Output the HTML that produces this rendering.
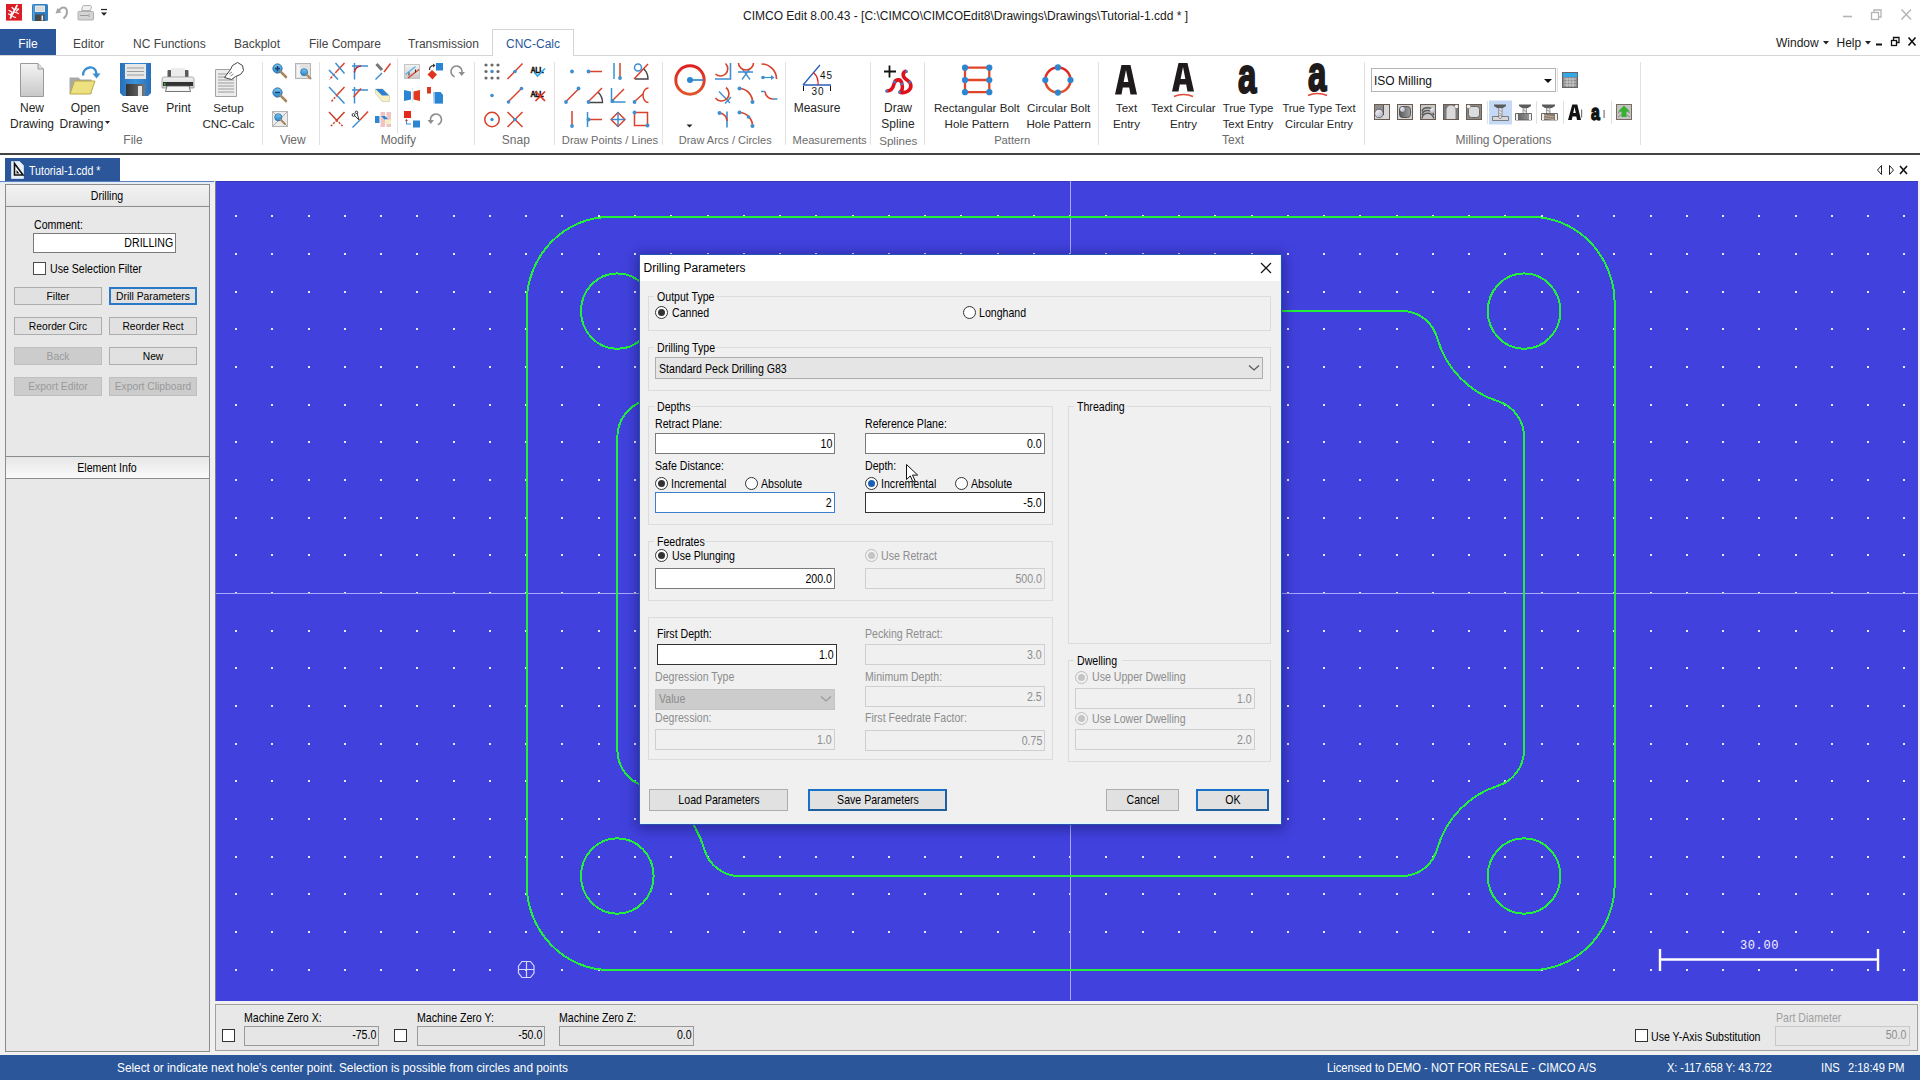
<!DOCTYPE html>
<html><head><meta charset="utf-8">
<style>
*{box-sizing:border-box}
html,body{margin:0;padding:0}
body{width:1920px;height:1080px;overflow:hidden;position:relative;background:#fff;font-family:"Liberation Sans",sans-serif;font-size:12px;color:#222}
.a{position:absolute}
.t{position:absolute;white-space:nowrap;line-height:1}
</style></head><body>
<div class="t" style="font-size:12px;color:#1a1a1a;top:9.84px;left:743px;">CIMCO Edit 8.00.43 - [C:\CIMCO\CIMCOEdit8\Drawings\Drawings\Tutorial-1.cdd * ]</div>
<svg class="a" style="left:1836px;top:4px" width="84" height="50">
<path d="M7 12.5h9" stroke="#b4b4b4" stroke-width="1.6"/>
<g fill="none" stroke="#b4b4b4" stroke-width="1.3"><rect x="35.5" y="8.5" width="7" height="7"/><path d="M38 8.5V6h7v7h-2.5"/></g>
<path d="M65.5 5.5l9.5 10M75 5.5l-9.5 10" stroke="#b4b4b4" stroke-width="1.4"/>
<path d="M40 40.5h6" stroke="#111" stroke-width="2"/>
<g fill="none" stroke="#111" stroke-width="1.3"><rect x="55.5" y="36.5" width="5" height="5"/><path d="M57.5 36.5V33.5h5.5v5h-2"/></g>
<path d="M72.5 33.5l7 8M79.5 33.5l-7 8" stroke="#111" stroke-width="1.6"/>
</svg>
<div class="a" style="left:0px;top:55px;width:1920px;height:1px;background:#d5d5d5"></div>
<div class="a" style="left:0px;top:29px;width:56px;height:26px;background:#2b579a"></div>
<div class="t" style="font-size:12px;color:#fff;top:37.74px;left:-172px;width:400px;text-align:center;">File</div>
<div class="a" style="left:492px;top:29px;width:82px;height:27px;border:1px solid #d5d5d5;border-bottom:none;background:#fff"></div>
<div class="t" style="font-size:12px;color:#444;top:37.74px;left:73px;">Editor</div>
<div class="t" style="font-size:12px;color:#444;top:37.74px;left:133px;">NC Functions</div>
<div class="t" style="font-size:12px;color:#444;top:37.74px;left:234px;">Backplot</div>
<div class="t" style="font-size:12px;color:#444;top:37.74px;left:309px;">File Compare</div>
<div class="t" style="font-size:12px;color:#444;top:37.74px;left:408px;">Transmission</div>
<div class="t" style="font-size:12px;color:#2b579a;top:37.74px;left:506px;">CNC-Calc</div>
<div class="t" style="font-size:12px;color:#1a1a1a;top:36.54px;left:1776px;">Window</div>
<div class="t" style="font-size:12px;color:#1a1a1a;top:36.54px;left:1836.5px;">Help</div>
<svg class="a" style="left:1820px;top:38px" width="60" height="10"><path d="M3 3h6l-3 3.5z" fill="#222"/><path d="M45 3h6l-3 3.5z" fill="#222"/></svg>
<svg class="a" style="left:0;top:0" width="1920" height="156">
<defs>
<linearGradient id="gRed" x1="0" y1="0" x2="0" y2="1"><stop offset="0" stop-color="#e02020"/><stop offset="1" stop-color="#e0552a"/></linearGradient>
<linearGradient id="gLens" x1="0" y1="0" x2="0" y2="1"><stop offset="0" stop-color="#7cc6f0"/><stop offset="1" stop-color="#2187d0"/></linearGradient>
<linearGradient id="gGray" x1="0" y1="0" x2="0" y2="1"><stop offset="0" stop-color="#f4f4f4"/><stop offset="1" stop-color="#c8c8c8"/></linearGradient>
<linearGradient id="gShut" x1="0" y1="0" x2="1" y2="0"><stop offset="0" stop-color="#333"/><stop offset="1" stop-color="#777"/></linearGradient><linearGradient id="gSave" x1="0" y1="0" x2="1" y2="0"><stop offset="0" stop-color="#2a6fb8"/><stop offset="0.5" stop-color="#3b95dc"/><stop offset="1" stop-color="#2a6fb8"/></linearGradient>
<g id="lensP"><circle cx="5.5" cy="5.5" r="4.6" fill="url(#gLens)" stroke="#2a6aa0" stroke-width="1"/><path d="M8.6 8.6L14 14" stroke="#a8865e" stroke-width="2.6" stroke-linecap="round"/></g>
</defs>
<!-- quick access toolbar -->
<rect x="6" y="4" width="16" height="16.6" fill="#dc1c24"/>
<g stroke="#fff" stroke-linecap="round"><path d="M10.5 18l6.5-12.5" stroke-width="1.7"/><path d="M9 10.5l3 1.5M8.5 14l3 1M15.5 8.5l3 1M14.5 12l4 1.5M12 7.5l2 2M10.5 15.5l1-2.5M16.5 11l2-2M13 16.5l2.5 1" stroke-width="1.3"/></g>
<rect x="32" y="4" width="16" height="17" rx="1.5" fill="#2f7fc4"/><rect x="33" y="5" width="1.5" height="15" fill="#5a9fd8"/>
<rect x="35" y="5.5" width="10" height="6.5" fill="#e6e6e6"/><path d="M36 8h8M36 10h8" stroke="#c4c4c4" stroke-width=".7"/><rect x="35" y="14.5" width="9.5" height="6.5" fill="#4a4a4a"/><rect x="41.5" y="15.5" width="1.6" height="5" fill="#eee"/>
<path d="M58.5 11.5C61 6 67 6 67 12C67 15 65.5 17 63.5 18.5" fill="none" stroke="#a6a6a6" stroke-width="2"/><path d="M55.5 13.5L57.5 8L61.5 12.5z" fill="#a6a6a6"/>
<path d="M82.5 6.5l1-1h7l1 1-1 4h-9z" fill="#f0f0f0" stroke="#a8a8a8" stroke-width=".9"/><path d="M79 11.5h13.5a1 1 0 0 1 1 1v6.5a1 1 0 0 1-1 1h-13.5a1 1 0 0 1-1-1v-6.5a1 1 0 0 1 1-1z" fill="#d4d4d4" stroke="#a8a8a8" stroke-width=".9"/><path d="M80 15.5h8M89 14v3" stroke="#9a9a9a" stroke-width="1"/>
<path d="M101 9.5h6" stroke="#222" stroke-width="1.2"/><path d="M101 12.5h6l-3 3.3z" fill="#222"/>
<!-- separators -->
<g fill="#e1e1e1"><rect x="262" y="62" width="1" height="83"/><rect x="319" y="62" width="1" height="83"/><rect x="474" y="62" width="1" height="83"/><rect x="554" y="62" width="1" height="83"/><rect x="662" y="62" width="1" height="83"/><rect x="785" y="62" width="1" height="83"/><rect x="870" y="62" width="1" height="83"/><rect x="924" y="62" width="1" height="83"/><rect x="1098" y="62" width="1" height="83"/><rect x="1364" y="62" width="1" height="83"/><rect x="1640" y="62" width="1" height="83"/><rect x="397" y="58" width="1" height="75"/>
<rect x="1487" y="101" width="1" height="23"/><rect x="1536" y="101" width="1" height="23"/><rect x="1563" y="101" width="1" height="23"/><rect x="1611" y="101" width="1" height="23"/><rect x="1557" y="68" width="1" height="24"/></g>

<!-- FILE group -->
<path d="M20.5 63.5H38L43.5 69V96.5H20.5Z" fill="url(#gGray)" stroke="#9a9a9a"/><path d="M38 63.5V69H43.5" fill="#ddd" stroke="#9a9a9a"/>
<path d="M69.5 77.5h9l2 2h11v14.5h-22z" fill="#a9a9a9"/><path d="M70 94L74.5 81H95L90.5 94Z" fill="#ece07f" stroke="#bba94a" stroke-width="1"/>
<path d="M83 75.5C83 66 96 64 96.5 74" fill="none" stroke="#3a8dd0" stroke-width="2.4"/><path d="M92.5 73.5h8l-4 5z" fill="#3a8dd0"/>
<path d="M120 63h31v30l-3 3h-25l-3-3z" fill="url(#gSave)"/><rect x="125" y="64" width="21" height="15" fill="#e8e8e8"/><path d="M127 68h17M127 71.5h17M127 75h17" stroke="#9c9c9c" stroke-width="1"/><rect x="126" y="84" width="19" height="12" fill="url(#gShut)"/><rect x="138" y="86" width="4" height="10" fill="#e8e8e8"/>
<rect x="167.5" y="70" width="21" height="8" rx="1" fill="#5a5a5a"/><rect x="171" y="68" width="14" height="9" fill="#ececec"/><path d="M164 77h28a2 2 0 0 1 2 2v9h-32v-9a2 2 0 0 1 2-2z" fill="url(#gGray)" stroke="#9a9a9a" stroke-width=".8"/><rect x="163" y="82" width="30" height="4" fill="#333"/><path d="M167 86h22l1.5 5.5h-25z" fill="#f6f6f6" stroke="#555" stroke-width=".8"/><rect x="164" y="83" width="1.5" height="2.5" fill="#3a3"/>
<path d="M215.5 69.5h21v27h-21z" fill="#ececec" stroke="#a2a2a2"/><path d="M218 74h16M218 77h16M218 80h16M218 83h16M218 86h16M218 89h16M218 92h16" stroke="#9a9a9a" stroke-width="1"/><path d="M224.5 77.5l6-8 2-4 5-3 5 3 1 5-3 4-5 2-4 3z" fill="#fff" stroke="#444" stroke-width="1"/><path d="M229 74l3-2M230.5 76l3-2" stroke="#666" stroke-width=".8"/>

<!-- VIEW group -->
<use href="#lensP" x="272" y="63"/><path d="M275 68.5h5M277.5 66v5" stroke="#1c3b6a" stroke-width="1.4"/>
<rect x="295.5" y="63.5" width="15" height="15" fill="#e2e2e2" stroke="#b4b4b4"/><rect x="297" y="65" width="3" height="12" fill="#f4f4f4"/><g transform="translate(300,68) scale(0.75)"><use href="#lensP"/></g>
<use href="#lensP" x="272" y="87"/><path d="M275 92.5h5" stroke="#1c3b6a" stroke-width="1.4"/>
<rect x="272.5" y="111.5" width="15" height="15" fill="#ececec" stroke="#b4b4b4"/><path d="M273 112l14 14M287 112l-14 14" stroke="#9a9a9a" stroke-width=".8"/><g transform="translate(274,113) scale(0.78)"><use href="#lensP"/></g>

<!-- MODIFY group -->
<g fill="none" stroke-width="1.5">
<path d="M344.5 63l-7.5 8" stroke="#d9412b"/><path d="M337 71l-7.5 8.5" stroke="#d9412b" stroke-dasharray="2.5 1.2"/><path d="M329 70l9 9.5M335.5 63l9 10.5" stroke="#3d8fd1"/>
<path d="M329 87l15.5 16.5" stroke="#3d8fd1"/><path d="M344.5 87l-7 7.5" stroke="#d9412b"/><path d="M337.5 94.5l-6.5 7.5" stroke="#d9412b" stroke-dasharray="2.2 1.3"/>
<path d="M329 112l7.5 8M344.5 112l-7.5 8" stroke="#c8402b"/><path d="M336.5 120l6.5 6.5M337 120l-6.5 6.5" stroke="#c8402b" stroke-dasharray="2 1.3"/>
<path d="M354.5 63v16.5M352 66h16" stroke="#3d8fd1"/><path d="M354.5 72.5a6.5 6.5 0 0 1 6.5-6.5" stroke="#b8303a"/>
<path d="M354.5 87v16.5M352 90h16" stroke="#3d8fd1"/><path d="M353.5 97l7.5-8.5" stroke="#d9412b"/>
<path d="M352.5 127.5l7.5-7.5" stroke="#3d8fd1"/><path d="M360 120l8-8.5" stroke="#d9412b"/>
<path d="M375.5 79.5l6.5-6.5" stroke="#3d8fd1"/><path d="M384 72l6.5-8.5" stroke="#d9412b"/><path d="M376.5 64l5.5 6" stroke="#777" stroke-width="3"/>
</g>
<g fill="none" stroke="#222" stroke-width=".9"><circle cx="353.5" cy="115" r="1.4"/><circle cx="356.5" cy="112.3" r="1.2"/><path d="M354.5 115.5l4.5 4.5M357 113l2 7"/></g>
<path d="M375.5 89h7l7 6.5v6h-7.5l-6.5-8z" fill="#f4efc4" stroke="#c9c49a" stroke-width=".6"/><path d="M375.5 89h7l6.5 6.5h-7z" fill="#2a7fcf"/>
<rect x="380.5" y="112" width="4.5" height="15" fill="#f0c4c4"/><rect x="386.5" y="112" width="4.5" height="15" fill="#f0c4c4"/><rect x="375" y="116" width="4.5" height="7" fill="#2f86d0"/><path d="M381 116h4l3.5 3.5h-4z" fill="#2f86d0"/><rect x="385" y="119.5" width="6" height="4.5" fill="#f4efc4"/>
<rect x="404.5" y="64.5" width="15" height="14" fill="url(#gGray)" stroke="#c4c4c4"/><path d="M405.5 74.5l10-8" stroke="#5aaee8" stroke-width="1.3"/><path d="M408 78l11-8.5" stroke="#d9412b" stroke-width="1.3"/><path d="M409 72.5v3M415.5 69.5v3" stroke="#333" stroke-width="1"/>
<path d="M404 90l7 1.5v8l-7 1.5z" fill="#2a86d4"/><path d="M420 90l-6.5 1.5v8l6.5 1.5z" fill="#e2381e"/><rect x="411.8" y="88" width="1" height="15" fill="#dde4ee"/>
<rect x="404" y="111" width="7" height="7" fill="#e42a1a"/><rect x="413" y="120.5" width="7" height="7" fill="#2f86d0"/><path d="M406.5 119.5v4.5h4.5" fill="none" stroke="#3d8fd1" stroke-width="1.1"/><path d="M405 121l1.5-2 1.5 2z" fill="#c33"/>
<path d="M427.5 74.5l4.5-4.5 5 4.5-4.5 5z" fill="#df3420"/><rect x="436" y="63" width="7" height="7.5" fill="#2a86d4"/><path d="M429.5 70c0-3 2-4.5 4.5-4.5" fill="none" stroke="#333" stroke-width="1.2"/><path d="M433 63.5l2.5 2-2.5 2z" fill="#333"/>
<rect x="427" y="87" width="4" height="6.5" fill="#d83a22"/><path d="M433 92h7l3 3v8.5h-9.5z" fill="#2a86d4" opacity=".5"/><path d="M435 92h5.5l2.5 3v8.5h-8z" fill="#2a86d4"/>
<path d="M437.9 124.7A5.5 5.5 0 1 0 430.8 121.4" fill="none" stroke="#8e8e8e" stroke-width="1.6"/><path d="M427.5 120h6.5l-3.2 4z" fill="#8e8e8e"/>
<path d="M454.6 76.7A5.5 5.5 0 1 1 461.7 73.4" fill="none" stroke="#8e8e8e" stroke-width="1.6"/><path d="M458.5 72h6.5l-3.3 4z" fill="#8e8e8e"/>

<!-- SNAP group -->
<g fill="#6a6a6a"><circle cx="486" cy="65" r="1.6"/><circle cx="492" cy="65" r="1.6"/><circle cx="498" cy="65" r="1.6"/><circle cx="486" cy="71.5" r="1.6"/><circle cx="498" cy="71.5" r="1.6"/><circle cx="486" cy="78" r="1.6"/><circle cx="492" cy="78" r="1.6"/><circle cx="498" cy="78" r="1.6"/></g><circle cx="492" cy="71.5" r="1.7" fill="#3d8fd1"/>
<circle cx="492" cy="95.5" r="1.8" fill="#3d8fd1"/>
<circle cx="492" cy="119.5" r="7.2" fill="none" stroke="#d9412b" stroke-width="1.5"/><circle cx="492" cy="119.5" r="1.7" fill="#3d8fd1"/>
<g fill="none" stroke="#d9412b" stroke-width="1.5"><path d="M507.5 79l15-15.5"/><path d="M508 102l14-14"/><path d="M507.5 112l15 15M522.5 112l-15 15"/></g>
<g fill="#3d8fd1"><circle cx="515" cy="71.5" r="1.8"/><circle cx="508.5" cy="102" r="1.8"/><circle cx="521.5" cy="88.5" r="1.8"/><circle cx="515" cy="119.5" r="1.8"/></g>
<text transform="translate(530.5,72.5) scale(0.75,1)" font-family="Liberation Sans" font-weight="bold" font-size="9.6" fill="#111" stroke="#111" stroke-width=".5" letter-spacing="-.6">ALL</text><path d="M534.5 72.5l3 3.5 7.5-7.5" fill="none" stroke="#2ea8e8" stroke-width="1.7"/>
<text transform="translate(530.5,96.5) scale(0.75,1)" font-family="Liberation Sans" font-weight="bold" font-size="9.6" fill="#111" stroke="#111" stroke-width=".5" letter-spacing="-.6">ALL</text><path d="M535.5 91.5l9.5 9.5M545 91.5l-9.5 9.5" stroke="#e2301e" stroke-width="1.7"/>

<!-- DRAW POINTS/LINES -->
<g fill="none" stroke="#d9412b" stroke-width="1.5">
<path d="M565.5 102l13-13"/><path d="M572 111v15"/>
<path d="M588 71.5h14"/><path d="M588 102l14-14"/><path d="M589 119.5h13"/>
<path d="M620 63v16"/><path d="M611 102l13-13"/><path d="M611 119.5l7-7 7 7-7 7z"/>
<path d="M634 79l14-15"/><path d="M634 102l9.5-8.5"/><path d="M648.5 88a5.5 7.3 0 0 0 0 14.6"/><rect x="634.5" y="112.5" width="13" height="13"/>
</g>
<g fill="none" stroke="#3d8fd1" stroke-width="1.5"><path d="M614 63v16"/><path d="M611.5 88v14h14"/><path d="M611 119.5h14M618 112v15"/><path d="M587.5 112v15"/><circle cx="638" cy="67.5" r="3.5"/></g>
<g fill="none" stroke="#444" stroke-width="1.4"><path d="M598.4 92.6A14 14 0 0 1 602.5 102.5H589"/><path d="M643.9 69.1A14 14 0 0 1 648 79H635"/></g>
<g fill="#3d8fd1"><circle cx="572" cy="71.5" r="1.9"/><circle cx="566" cy="102" r="1.9"/><circle cx="578.5" cy="88.5" r="1.9"/><circle cx="572" cy="126" r="1.9"/><circle cx="588.5" cy="71.5" r="1.9"/><circle cx="588.5" cy="102" r="1.9"/><circle cx="588.5" cy="119.5" r="1.9"/><circle cx="620" cy="78" r="1.9"/><circle cx="612.5" cy="101" r="1.9"/><circle cx="634.5" cy="102" r="1.9"/><circle cx="634.5" cy="112.5" r="1.9"/><circle cx="647.5" cy="125.5" r="1.9"/></g>

<!-- DRAW ARCS/CIRCLES -->
<circle cx="690" cy="80" r="14.2" fill="none" stroke="url(#gRed)" stroke-width="3"/><path d="M690 80h13" stroke="#3d8fd1" stroke-width="1.8"/><circle cx="690" cy="80" r="3" fill="#2e86d0"/>
<path d="M686.5 124.5h6l-3 3z" fill="#222"/>
<g fill="none" stroke-width="1.6">
<path d="M715 79h15.5V63" stroke="#3d8fd1"/><path d="M725.5 63.5A7 7 0 1 1 715.5 74" stroke="#d9412b"/>
<path d="M738 72h15M742 68.5l8 11M750 68.5l-8 11" stroke="#3d8fd1" stroke-width="1.3"/><path d="M738.5 63A7.5 7 0 0 0 753.5 63" stroke="#d9412b"/>
<path d="M761.5 64A15 15 0 0 1 776.5 79" stroke="#d9412b"/><path d="M763 77.5h9" stroke="#3d8fd1" stroke-width="1.2"/>
<path d="M719 91.5l11 11.5M725 103.5l6-6.5" stroke="#3d8fd1" stroke-width="1.4"/><path d="M726 87.5A7.5 7.5 0 1 1 715.5 98" stroke="#d9412b"/>
<path d="M739.5 88.5A13.5 13.5 0 0 1 752.5 102" stroke="#d9412b"/>
<path d="M761 91.5h4M773 99h4.5" stroke="#3d8fd1" stroke-width="1.4"/><path d="M765 91.5A8 8 0 0 0 773 99" stroke="#d9412b"/>
<path d="M727 111.5v16" stroke="#3d8fd1"/><path d="M719.5 113A8 8 0 0 1 727 121" stroke="#d9412b"/>
<path d="M739.5 112.5A13.5 13.5 0 0 1 752.5 126" stroke="#d9412b"/>
</g>
<path d="M771 75l3.5 2.5-3.5 2.5z" fill="#3d8fd1"/>
<g fill="#3d8fd1"><circle cx="763" cy="77.5" r="1.8"/><circle cx="739.5" cy="88.5" r="2"/><circle cx="752.5" cy="102" r="2"/><circle cx="719.5" cy="113" r="2"/><circle cx="739.5" cy="112.5" r="2"/><circle cx="748.5" cy="117" r="1.8"/><circle cx="752.5" cy="126" r="2"/></g>

<!-- MEASURE -->
<path d="M803 85h28M803 85l17-20" stroke="#2c5fb8" stroke-width="1.3" fill="none"/><path d="M813.5 72.5a15 15 0 0 1 4.5 12.5" stroke="#e02020" stroke-width="1.3" fill="none"/>
<path d="M803.5 86v5M830.5 86v5" stroke="#111" stroke-width="1"/>
<text x="820" y="78.5" font-family="Liberation Sans" font-size="10" fill="#111" letter-spacing="1">45</text><text x="811.5" y="95" font-family="Liberation Sans" font-size="10" fill="#111" letter-spacing="1">30</text>

<!-- SPLINE -->
<path d="M884 71.5h12M889.5 65.5v12" stroke="#111" stroke-width="1.8"/>
<g fill="none" stroke="#e0101a" stroke-width="3.6"><path d="M886.5 91C891 91 893 89 894 84C895 79 901 78 902 84C903 89 902 91.5 899.5 92"/><path d="M906.5 71C902 72 902 77 907 80C912 83 912 88 908 91C905 93 901 93 899.5 92"/></g>
<g fill="#4a78c0"><circle cx="886.5" cy="91" r="1.5"/><circle cx="894.5" cy="82" r="1.5"/><circle cx="902" cy="84" r="1.5"/><circle cx="910" cy="82" r="1.5"/><circle cx="906.5" cy="71.5" r="1.5"/><circle cx="899.5" cy="92" r="1.5"/></g>

<!-- PATTERN -->
<path d="M965 67.7h24.3M965 80h24.3M965 92.2h24.3M965 67.7v24.5M989.3 67.7v24.5" stroke="#e0452a" stroke-width="2.3" fill="none"/>
<g fill="#2e86d0"><circle cx="965" cy="67.7" r="3.1"/><circle cx="989.3" cy="67.7" r="3.1"/><circle cx="965" cy="80" r="3.1"/><circle cx="989.3" cy="80" r="3.1"/><circle cx="965" cy="92.2" r="3.1"/><circle cx="989.3" cy="92.2" r="3.1"/></g>
<circle cx="1057.9" cy="80" r="12.6" fill="none" stroke="url(#gRed)" stroke-width="2.5"/>
<g fill="#2e86d0"><circle cx="1057.9" cy="67.4" r="3.1"/><circle cx="1057.9" cy="92.6" r="3.1"/><circle cx="1045.3" cy="80" r="3.1"/><circle cx="1070.5" cy="80" r="3.1"/></g>

<!-- TEXT icons -->
<path d="M1115 94.5L1121.5 65h9L1137 94.5h-6.5l-1.3-7h-6.4l-1.3 7zM1123.6 82h4.8l-2.4-12z" fill="#1f1a1b" fill-rule="evenodd"/>
<path d="M1172 91.5L1178.5 63h9L1194 91.5h-6.5l-1.3-7h-6.4l-1.3 7zM1180.6 79h4.8l-2.4-12z" fill="#1f1a1b" fill-rule="evenodd"/><path d="M1174 96.5a14 8 0 0 1 19 0" fill="none" stroke="#e04a3a" stroke-width="1.5"/>
<text transform="translate(1238,93) scale(0.66,1)" font-family="Liberation Sans" font-weight="bold" font-size="50" fill="#1f1a1b" stroke="#1f1a1b" stroke-width="2.2">a</text>
<text transform="translate(1308,90.5) scale(0.66,1)" font-family="Liberation Sans" font-weight="bold" font-size="50" fill="#1f1a1b" stroke="#1f1a1b" stroke-width="2.2">a</text><path d="M1308 95.5a14 8 0 0 1 19 0" fill="none" stroke="#e04a3a" stroke-width="1.5"/>

<!-- MILLING OPS -->
<rect x="1371.5" y="68.5" width="184" height="23" fill="#fff" stroke="#b4b4b4"/>
<path d="M1544 79h8l-4 4z" fill="#111"/>
<rect x="1562.5" y="72.5" width="15" height="15" fill="#8a8a8a" stroke="#666"/><rect x="1563" y="73" width="14" height="4" fill="#33a8e8"/><path d="M1564 79h12M1564 82h12M1564 85h12M1567 78v9M1570 78v9M1573 78v9" stroke="#ddd" stroke-width=".8"/>
<rect x="1489" y="100.5" width="23" height="24" fill="#c5d8f5"/>
<defs><linearGradient id="gSph" x1="0" y1="0" x2="1" y2="1"><stop offset="0" stop-color="#fff"/><stop offset="1" stop-color="#a8a8c0"/></linearGradient>
<linearGradient id="gDk" x1="0" y1="0" x2="1" y2="0"><stop offset="0" stop-color="#5a5a5a"/><stop offset="1" stop-color="#a0a0a0"/></linearGradient></defs>
<g stroke="#6a5a50" stroke-width="1">
<rect x="1374.5" y="104.5" width="15" height="15" fill="#d8d8d8"/>
<rect x="1397.5" y="104.5" width="15" height="15" fill="#d4d4d4"/>
<rect x="1420.5" y="104.5" width="15" height="15" fill="#c8c8c8"/>
<rect x="1443.5" y="104.5" width="15" height="15" fill="#7a7a7a"/>
<rect x="1466.5" y="104.5" width="15" height="15" fill="#8a8a8a"/>
</g>
<rect x="1375" y="105" width="8" height="9" fill="#8e8e8e"/><rect x="1383" y="105" width="1" height="10" fill="#555"/><circle cx="1379" cy="113.5" r="4.3" fill="url(#gSph)" stroke="#444" stroke-width=".7"/>
<rect x="1399.5" y="106.5" width="11" height="11" rx="3" fill="url(#gDk)" stroke="#444" stroke-width=".8"/><circle cx="1402.5" cy="109.5" r="2.4" fill="url(#gSph)"/>
<path d="M1422 118.5c1-7 10-7 12 0M1422 115c1-6 10-6 12 0M1422 111.5c1-5 10-5 12 0" fill="none" stroke="#5a5a5a" stroke-width="1.4"/><circle cx="1432.5" cy="110.5" r="2.4" fill="url(#gSph)"/>
<path d="M1446.5 119v-9a4.5 4.5 0 0 1 9 0v9z" fill="#dadada"/><circle cx="1456.5" cy="106.5" r="1.8" fill="#eee"/>
<rect x="1468.5" y="106.5" width="11" height="11" rx="3" fill="#dcdcdc" stroke="#555" stroke-width=".8"/><circle cx="1468.5" cy="106.5" r="1.8" fill="#eee"/>
<g fill="#5a5a5a"><path d="M1494 104.5h12v1.5l-3 2h-6l-3-2z"/><path d="M1519 104.5h12v1.5l-3 2h-6l-3-2z"/><path d="M1542 104.5h13v1.5l-3 2h-7l-3-2z"/></g>
<g fill="#e8e8e8" stroke="#777" stroke-width=".7"><rect x="1498.5" y="108" width="3.5" height="9"/><rect x="1523" y="108" width="3.5" height="7"/><rect x="1546.5" y="108" width="3.5" height="6"/></g>
<path d="M1499 110l2.5 1.5M1499 113l2.5 1.5M1523.5 110l2.5 1.5M1547 110l2.5 1.5" stroke="#666" stroke-width=".6"/>
<path d="M1492.5 116.5h16v4h-16z" fill="#d8d8d8" stroke="#666" stroke-width=".8"/><circle cx="1500.2" cy="117" r="1.6" fill="#ddd" stroke="#666" stroke-width=".5"/>
<path d="M1515.5 113.5h16v6.5h-16z" fill="url(#gDk)" stroke="#555" stroke-width=".8"/><rect x="1516" y="114" width="2" height="6" fill="#eee"/><rect x="1529" y="114" width="2" height="6" fill="#eee"/>
<path d="M1541.5 113.5h16v6.5h-16z" fill="#8a7a6a" stroke="#555" stroke-width=".8"/><path d="M1544 115.5l10 1.5M1544 118l10 1.5" stroke="#cdbfb0" stroke-width=".8"/><rect x="1542" y="114" width="2" height="6" fill="#eee"/><rect x="1555" y="114" width="2" height="6" fill="#eee"/>
<path d="M1568 120l4.3-15.5h5L1581 120h-4l-.7-3.5h-3.8l-.7 3.5zM1573.2 113h2.6l-1.3-6z" fill="#111" fill-rule="evenodd"/><rect x="1581" y="109.5" width="1.2" height="8" fill="#777"/>
<text transform="translate(1591,120) scale(0.72,1)" font-family="Liberation Sans" font-weight="bold" font-size="22" fill="#111" stroke="#111" stroke-width="1.4">a</text><rect x="1603.5" y="110" width="1.2" height="8" fill="#777"/>
<rect x="1616.5" y="104.5" width="15" height="15" fill="#c4c4c4" stroke="#7a6a60"/><path d="M1618 117c3-3 8-3 12 0M1618 113c3-3 8-3 12 0" stroke="#8a8a8a" fill="none"/><path d="M1624 105.5l6 6h-3.5v5.5h-5v-5.5h-3.5z" fill="#38b030"/>
</svg>

<div class="a" style="left:0px;top:153px;width:1920px;height:2px;background:#444"></div>
<div class="t" style="font-size:12px;color:#262626;top:102.14px;left:-168px;width:400px;text-align:center;">New</div>
<div class="t" style="font-size:12px;color:#262626;top:118.04px;left:-168px;width:400px;text-align:center;">Drawing</div>
<div class="t" style="font-size:12px;color:#262626;top:102.14px;left:-114.5px;width:400px;text-align:center;">Open</div>
<div class="t" style="font-size:12px;color:#262626;top:118.04px;left:59.5px;">Drawing</div>
<svg class="a" style="left:104px;top:120px" width="8" height="6"><path d="M1 1h5l-2.5 3z" fill="#222"/></svg>
<div class="t" style="font-size:12px;color:#262626;top:102.14px;left:-65px;width:400px;text-align:center;">Save</div>
<div class="t" style="font-size:12px;color:#262626;top:102.14px;left:-21.400000000000006px;width:400px;text-align:center;">Print</div>
<div class="t" style="font-size:11.6px;color:#262626;top:102.48px;left:28.5px;width:400px;text-align:center;">Setup</div>
<div class="t" style="font-size:11.6px;color:#262626;top:118.38px;left:28.5px;width:400px;text-align:center;">CNC-Calc</div>
<div class="t" style="font-size:12px;color:#262626;top:102.14px;left:617px;width:400px;text-align:center;">Measure</div>
<div class="t" style="font-size:12px;color:#262626;top:102.14px;left:698px;width:400px;text-align:center;">Draw</div>
<div class="t" style="font-size:12px;color:#262626;top:118.04px;left:698px;width:400px;text-align:center;">Spline</div>
<div class="t" style="font-size:11.6px;color:#262626;top:102.48px;left:776.8px;width:400px;text-align:center;">Rectangular Bolt</div>
<div class="t" style="font-size:11.6px;color:#262626;top:118.38px;left:776.8px;width:400px;text-align:center;">Hole Pattern</div>
<div class="t" style="font-size:11.6px;color:#262626;top:102.48px;left:858.7px;width:400px;text-align:center;">Circular Bolt</div>
<div class="t" style="font-size:11.6px;color:#262626;top:118.38px;left:858.7px;width:400px;text-align:center;">Hole Pattern</div>
<div class="t" style="font-size:11.6px;color:#262626;top:102.48px;left:926.5px;width:400px;text-align:center;">Text</div>
<div class="t" style="font-size:11.6px;color:#262626;top:118.38px;left:926.5px;width:400px;text-align:center;">Entry</div>
<div class="t" style="font-size:11.6px;color:#262626;top:102.48px;left:983.5px;width:400px;text-align:center;">Text Circular</div>
<div class="t" style="font-size:11.6px;color:#262626;top:118.38px;left:983.5px;width:400px;text-align:center;">Entry</div>
<div class="t" style="font-size:11.4px;color:#262626;top:102.65px;left:1048px;width:400px;text-align:center;">True Type</div>
<div class="t" style="font-size:11.4px;color:#262626;top:118.55px;left:1048px;width:400px;text-align:center;">Text Entry</div>
<div class="t" style="font-size:11.2px;color:#262626;top:102.82px;left:1119px;width:400px;text-align:center;">True Type Text</div>
<div class="t" style="font-size:11.2px;color:#262626;top:118.72px;left:1119px;width:400px;text-align:center;">Circular Entry</div>
<div class="t" style="font-size:12px;color:#111;top:74.84px;left:1374px;">ISO Milling</div>
<div class="t" style="font-size:12px;color:#6b6b6b;top:134.44px;left:-67px;width:400px;text-align:center;">File</div>
<div class="t" style="font-size:12px;color:#6b6b6b;top:134.44px;left:92.80000000000001px;width:400px;text-align:center;">View</div>
<div class="t" style="font-size:12px;color:#6b6b6b;top:134.44px;left:198.3px;width:400px;text-align:center;">Modify</div>
<div class="t" style="font-size:12px;color:#6b6b6b;top:134.44px;left:315.79999999999995px;width:400px;text-align:center;">Snap</div>
<div class="t" style="font-size:11.2px;color:#6b6b6b;top:135.12px;left:410px;width:400px;text-align:center;">Draw Points / Lines</div>
<div class="t" style="font-size:11px;color:#6b6b6b;top:135.29px;left:525.2px;width:400px;text-align:center;">Draw Arcs / Circles</div>
<div class="t" style="font-size:11.2px;color:#6b6b6b;top:135.12px;left:629.6px;width:400px;text-align:center;">Measurements</div>
<div class="t" style="font-size:11.6px;color:#6b6b6b;top:134.78px;left:698.2px;width:400px;text-align:center;">Splines</div>
<div class="t" style="font-size:11.2px;color:#6b6b6b;top:135.12px;left:812.2px;width:400px;text-align:center;">Pattern</div>
<div class="t" style="font-size:12px;color:#6b6b6b;top:134.44px;left:1033px;width:400px;text-align:center;">Text</div>
<div class="t" style="font-size:12px;color:#6b6b6b;top:134.44px;left:1303.5px;width:400px;text-align:center;">Milling Operations</div>
<div class="a" style="left:5px;top:158px;width:115px;height:23px;background:#2b579a"></div>
<svg class="a" style="left:9px;top:160px" width="18" height="20"><path d="M2.5 1.5h8l4 4v13h-12z" fill="#e8f0fa" stroke="#c8d8ee"/><path d="M5.5 3.5l8.5 11.5H5.5z" fill="#fff" stroke="#111" stroke-width="1.6"/><path d="M7.5 10l3 3.5h-3z" fill="#111"/></svg>
<div class="t" style="font-size:11.98px;color:#fff;top:165.46px;left:28.5px;transform:scaleX(0.885);transform-origin:0 0;">Tutorial-1.cdd *</div>
<div class="a" style="left:0px;top:181px;width:1920px;height:1px;background:#5b7fbf"></div>
<svg class="a" style="left:1874px;top:163px" width="40" height="14"><path d="M7.5 2.5v9l-4-4.5z" fill="none" stroke="#222" stroke-width="1"/><path d="M15.5 2.5v9l4-4.5z" fill="none" stroke="#222" stroke-width="1"/><path d="M26 3l7 8M33 3l-7 8" stroke="#111" stroke-width="1.6"/></svg>
<div class="a" style="left:0px;top:182px;width:215px;height:873px;background:#f0f0f0"></div>
<div class="a" style="left:5px;top:182px;width:205px;height:870px;background:#e8e8e8;border:1px solid #8c8c8c;border-top:none"></div>
<div class="a" style="left:0px;top:182px;width:214px;height:2px;background:#e4ecf6"></div>
<div class="a" style="left:6px;top:184px;width:203px;height:23px;background:linear-gradient(#f2f2f2,#e6e6e6);border-top:1px solid #8c8c8c;border-bottom:1px solid #8c8c8c"></div>
<div class="t" style="font-size:11.98px;color:#000;top:190.36px;left:-93px;width:400px;text-align:center;transform:scaleX(0.885);transform-origin:50% 0;">Drilling</div>
<div class="t" style="font-size:11.98px;color:#000;top:218.66px;left:33.5px;transform:scaleX(0.885);transform-origin:0 0;">Comment:</div>
<div class="a" style="left:33px;top:233px;width:143px;height:20px;background:#fff;border:1px solid #7a7a7a"></div>
<div class="t" style="font-size:11.98px;color:#000;top:237.16px;right:1747px;transform:scaleX(0.885);transform-origin:100% 0;">DRILLING</div>
<div class="a" style="left:33px;top:262px;width:13px;height:13px;background:#fff;border:1px solid #4a4a4a"></div>
<div class="t" style="font-size:11.98px;color:#000;top:262.66px;left:49.5px;transform:scaleX(0.885);transform-origin:0 0;">Use Selection Filter</div>
<div class="a" style="left:14px;top:287px;width:88px;height:18px;background:#e1e1e1;border:1px solid #adadad"></div>
<div class="t" style="font-size:11.64px;color:#000;top:290.35px;left:-142.0px;width:400px;text-align:center;transform:scaleX(0.885);transform-origin:50% 0;">Filter</div>
<div class="a" style="left:109px;top:287px;width:88px;height:18px;background:#e1e1e1;border:2px solid #2a78c8"></div>
<div class="t" style="font-size:11.64px;color:#000;top:290.35px;left:-47.0px;width:400px;text-align:center;transform:scaleX(0.885);transform-origin:50% 0;">Drill Parameters</div>
<div class="a" style="left:14px;top:317px;width:88px;height:18px;background:#e1e1e1;border:1px solid #adadad"></div>
<div class="t" style="font-size:11.64px;color:#000;top:320.35px;left:-142.0px;width:400px;text-align:center;transform:scaleX(0.885);transform-origin:50% 0;">Reorder Circ</div>
<div class="a" style="left:109px;top:317px;width:88px;height:18px;background:#e1e1e1;border:1px solid #adadad"></div>
<div class="t" style="font-size:11.64px;color:#000;top:320.35px;left:-47.0px;width:400px;text-align:center;transform:scaleX(0.885);transform-origin:50% 0;">Reorder Rect</div>
<div class="a" style="left:14px;top:347px;width:88px;height:18px;background:#cccccc;border:1px solid #bfbfbf"></div>
<div class="t" style="font-size:11.64px;color:#9a9a9a;top:350.35px;left:-142.0px;width:400px;text-align:center;transform:scaleX(0.885);transform-origin:50% 0;">Back</div>
<div class="a" style="left:109px;top:347px;width:88px;height:18px;background:#e1e1e1;border:1px solid #adadad"></div>
<div class="t" style="font-size:11.64px;color:#000;top:350.35px;left:-47.0px;width:400px;text-align:center;transform:scaleX(0.885);transform-origin:50% 0;">New</div>
<div class="a" style="left:14px;top:377px;width:88px;height:19px;background:#cccccc;border:1px solid #bfbfbf"></div>
<div class="t" style="font-size:11.64px;color:#9a9a9a;top:380.35px;left:-142.0px;width:400px;text-align:center;transform:scaleX(0.885);transform-origin:50% 0;">Export Editor</div>
<div class="a" style="left:109px;top:377px;width:88px;height:19px;background:#cccccc;border:1px solid #bfbfbf"></div>
<div class="t" style="font-size:11.64px;color:#9a9a9a;top:380.35px;left:-47.0px;width:400px;text-align:center;transform:scaleX(0.885);transform-origin:50% 0;">Export Clipboard</div>
<div class="a" style="left:6px;top:456px;width:203px;height:23px;background:linear-gradient(#e6e6e6,#fafafa);border-top:1px solid #8c8c8c;border-bottom:1px solid #8c8c8c"></div>
<div class="t" style="font-size:11.98px;color:#000;top:461.86px;left:-93px;width:400px;text-align:center;transform:scaleX(0.885);transform-origin:50% 0;">Element Info</div>
<div class="a" style="left:214px;top:181px;width:1706px;height:820px;background:#f0f0f0"></div>
<div class="a" style="left:215px;top:181px;width:1703px;height:820px;background:#4141de;border-left:1px solid #808080"></div>
<div class="a" style="left:216px;top:181px;width:1702px;height:1px;background:#3838b8"></div>
<div class="a" style="left:216px;top:181px"><svg id="cv" width="1702" height="819" viewBox="0 0 1702 819">
<path d="M19 34h2v2h-2zM19 72h2v2h-2zM19 110h2v2h-2zM19 147h2v2h-2zM19 185h2v2h-2zM19 223h2v2h-2zM19 260h2v2h-2zM19 298h2v2h-2zM19 336h2v2h-2zM19 373h2v2h-2zM19 411h2v2h-2zM19 449h2v2h-2zM19 486h2v2h-2zM19 524h2v2h-2zM19 562h2v2h-2zM19 599h2v2h-2zM19 637h2v2h-2zM19 675h2v2h-2zM19 712h2v2h-2zM19 750h2v2h-2zM19 788h2v2h-2zM55 34h2v2h-2zM55 72h2v2h-2zM55 110h2v2h-2zM55 147h2v2h-2zM55 185h2v2h-2zM55 223h2v2h-2zM55 260h2v2h-2zM55 298h2v2h-2zM55 336h2v2h-2zM55 373h2v2h-2zM55 411h2v2h-2zM55 449h2v2h-2zM55 486h2v2h-2zM55 524h2v2h-2zM55 562h2v2h-2zM55 599h2v2h-2zM55 637h2v2h-2zM55 675h2v2h-2zM55 712h2v2h-2zM55 750h2v2h-2zM55 788h2v2h-2zM92 34h2v2h-2zM92 72h2v2h-2zM92 110h2v2h-2zM92 147h2v2h-2zM92 185h2v2h-2zM92 223h2v2h-2zM92 260h2v2h-2zM92 298h2v2h-2zM92 336h2v2h-2zM92 373h2v2h-2zM92 411h2v2h-2zM92 449h2v2h-2zM92 486h2v2h-2zM92 524h2v2h-2zM92 562h2v2h-2zM92 599h2v2h-2zM92 637h2v2h-2zM92 675h2v2h-2zM92 712h2v2h-2zM92 750h2v2h-2zM92 788h2v2h-2zM128 34h2v2h-2zM128 72h2v2h-2zM128 110h2v2h-2zM128 147h2v2h-2zM128 185h2v2h-2zM128 223h2v2h-2zM128 260h2v2h-2zM128 298h2v2h-2zM128 336h2v2h-2zM128 373h2v2h-2zM128 411h2v2h-2zM128 449h2v2h-2zM128 486h2v2h-2zM128 524h2v2h-2zM128 562h2v2h-2zM128 599h2v2h-2zM128 637h2v2h-2zM128 675h2v2h-2zM128 712h2v2h-2zM128 750h2v2h-2zM128 788h2v2h-2zM164 34h2v2h-2zM164 72h2v2h-2zM164 110h2v2h-2zM164 147h2v2h-2zM164 185h2v2h-2zM164 223h2v2h-2zM164 260h2v2h-2zM164 298h2v2h-2zM164 336h2v2h-2zM164 373h2v2h-2zM164 411h2v2h-2zM164 449h2v2h-2zM164 486h2v2h-2zM164 524h2v2h-2zM164 562h2v2h-2zM164 599h2v2h-2zM164 637h2v2h-2zM164 675h2v2h-2zM164 712h2v2h-2zM164 750h2v2h-2zM164 788h2v2h-2zM200 34h2v2h-2zM200 72h2v2h-2zM200 110h2v2h-2zM200 147h2v2h-2zM200 185h2v2h-2zM200 223h2v2h-2zM200 260h2v2h-2zM200 298h2v2h-2zM200 336h2v2h-2zM200 373h2v2h-2zM200 411h2v2h-2zM200 449h2v2h-2zM200 486h2v2h-2zM200 524h2v2h-2zM200 562h2v2h-2zM200 599h2v2h-2zM200 637h2v2h-2zM200 675h2v2h-2zM200 712h2v2h-2zM200 750h2v2h-2zM200 788h2v2h-2zM237 34h2v2h-2zM237 72h2v2h-2zM237 110h2v2h-2zM237 147h2v2h-2zM237 185h2v2h-2zM237 223h2v2h-2zM237 260h2v2h-2zM237 298h2v2h-2zM237 336h2v2h-2zM237 373h2v2h-2zM237 411h2v2h-2zM237 449h2v2h-2zM237 486h2v2h-2zM237 524h2v2h-2zM237 562h2v2h-2zM237 599h2v2h-2zM237 637h2v2h-2zM237 675h2v2h-2zM237 712h2v2h-2zM237 750h2v2h-2zM237 788h2v2h-2zM273 34h2v2h-2zM273 72h2v2h-2zM273 110h2v2h-2zM273 147h2v2h-2zM273 185h2v2h-2zM273 223h2v2h-2zM273 260h2v2h-2zM273 298h2v2h-2zM273 336h2v2h-2zM273 373h2v2h-2zM273 411h2v2h-2zM273 449h2v2h-2zM273 486h2v2h-2zM273 524h2v2h-2zM273 562h2v2h-2zM273 599h2v2h-2zM273 637h2v2h-2zM273 675h2v2h-2zM273 712h2v2h-2zM273 750h2v2h-2zM273 788h2v2h-2zM309 34h2v2h-2zM309 72h2v2h-2zM309 110h2v2h-2zM309 147h2v2h-2zM309 185h2v2h-2zM309 223h2v2h-2zM309 260h2v2h-2zM309 298h2v2h-2zM309 336h2v2h-2zM309 373h2v2h-2zM309 411h2v2h-2zM309 449h2v2h-2zM309 486h2v2h-2zM309 524h2v2h-2zM309 562h2v2h-2zM309 599h2v2h-2zM309 637h2v2h-2zM309 675h2v2h-2zM309 712h2v2h-2zM309 750h2v2h-2zM309 788h2v2h-2zM345 34h2v2h-2zM345 72h2v2h-2zM345 110h2v2h-2zM345 147h2v2h-2zM345 185h2v2h-2zM345 223h2v2h-2zM345 260h2v2h-2zM345 298h2v2h-2zM345 336h2v2h-2zM345 373h2v2h-2zM345 411h2v2h-2zM345 449h2v2h-2zM345 486h2v2h-2zM345 524h2v2h-2zM345 562h2v2h-2zM345 599h2v2h-2zM345 637h2v2h-2zM345 675h2v2h-2zM345 712h2v2h-2zM345 750h2v2h-2zM345 788h2v2h-2zM382 34h2v2h-2zM382 72h2v2h-2zM382 110h2v2h-2zM382 147h2v2h-2zM382 185h2v2h-2zM382 223h2v2h-2zM382 260h2v2h-2zM382 298h2v2h-2zM382 336h2v2h-2zM382 373h2v2h-2zM382 411h2v2h-2zM382 449h2v2h-2zM382 486h2v2h-2zM382 524h2v2h-2zM382 562h2v2h-2zM382 599h2v2h-2zM382 637h2v2h-2zM382 675h2v2h-2zM382 712h2v2h-2zM382 750h2v2h-2zM382 788h2v2h-2zM418 34h2v2h-2zM418 72h2v2h-2zM418 110h2v2h-2zM418 147h2v2h-2zM418 185h2v2h-2zM418 223h2v2h-2zM418 260h2v2h-2zM418 298h2v2h-2zM418 336h2v2h-2zM418 373h2v2h-2zM418 411h2v2h-2zM418 449h2v2h-2zM418 486h2v2h-2zM418 524h2v2h-2zM418 562h2v2h-2zM418 599h2v2h-2zM418 637h2v2h-2zM418 675h2v2h-2zM418 712h2v2h-2zM418 750h2v2h-2zM418 788h2v2h-2zM454 34h2v2h-2zM454 72h2v2h-2zM454 110h2v2h-2zM454 147h2v2h-2zM454 185h2v2h-2zM454 223h2v2h-2zM454 260h2v2h-2zM454 298h2v2h-2zM454 336h2v2h-2zM454 373h2v2h-2zM454 411h2v2h-2zM454 449h2v2h-2zM454 486h2v2h-2zM454 524h2v2h-2zM454 562h2v2h-2zM454 599h2v2h-2zM454 637h2v2h-2zM454 675h2v2h-2zM454 712h2v2h-2zM454 750h2v2h-2zM454 788h2v2h-2zM491 34h2v2h-2zM491 72h2v2h-2zM491 110h2v2h-2zM491 147h2v2h-2zM491 185h2v2h-2zM491 223h2v2h-2zM491 260h2v2h-2zM491 298h2v2h-2zM491 336h2v2h-2zM491 373h2v2h-2zM491 411h2v2h-2zM491 449h2v2h-2zM491 486h2v2h-2zM491 524h2v2h-2zM491 562h2v2h-2zM491 599h2v2h-2zM491 637h2v2h-2zM491 675h2v2h-2zM491 712h2v2h-2zM491 750h2v2h-2zM491 788h2v2h-2zM527 34h2v2h-2zM527 72h2v2h-2zM527 110h2v2h-2zM527 147h2v2h-2zM527 185h2v2h-2zM527 223h2v2h-2zM527 260h2v2h-2zM527 298h2v2h-2zM527 336h2v2h-2zM527 373h2v2h-2zM527 411h2v2h-2zM527 449h2v2h-2zM527 486h2v2h-2zM527 524h2v2h-2zM527 562h2v2h-2zM527 599h2v2h-2zM527 637h2v2h-2zM527 675h2v2h-2zM527 712h2v2h-2zM527 750h2v2h-2zM527 788h2v2h-2zM563 34h2v2h-2zM563 72h2v2h-2zM563 110h2v2h-2zM563 147h2v2h-2zM563 185h2v2h-2zM563 223h2v2h-2zM563 260h2v2h-2zM563 298h2v2h-2zM563 336h2v2h-2zM563 373h2v2h-2zM563 411h2v2h-2zM563 449h2v2h-2zM563 486h2v2h-2zM563 524h2v2h-2zM563 562h2v2h-2zM563 599h2v2h-2zM563 637h2v2h-2zM563 675h2v2h-2zM563 712h2v2h-2zM563 750h2v2h-2zM563 788h2v2h-2zM599 34h2v2h-2zM599 72h2v2h-2zM599 110h2v2h-2zM599 147h2v2h-2zM599 185h2v2h-2zM599 223h2v2h-2zM599 260h2v2h-2zM599 298h2v2h-2zM599 336h2v2h-2zM599 373h2v2h-2zM599 411h2v2h-2zM599 449h2v2h-2zM599 486h2v2h-2zM599 524h2v2h-2zM599 562h2v2h-2zM599 599h2v2h-2zM599 637h2v2h-2zM599 675h2v2h-2zM599 712h2v2h-2zM599 750h2v2h-2zM599 788h2v2h-2zM636 34h2v2h-2zM636 72h2v2h-2zM636 110h2v2h-2zM636 147h2v2h-2zM636 185h2v2h-2zM636 223h2v2h-2zM636 260h2v2h-2zM636 298h2v2h-2zM636 336h2v2h-2zM636 373h2v2h-2zM636 411h2v2h-2zM636 449h2v2h-2zM636 486h2v2h-2zM636 524h2v2h-2zM636 562h2v2h-2zM636 599h2v2h-2zM636 637h2v2h-2zM636 675h2v2h-2zM636 712h2v2h-2zM636 750h2v2h-2zM636 788h2v2h-2zM672 34h2v2h-2zM672 72h2v2h-2zM672 110h2v2h-2zM672 147h2v2h-2zM672 185h2v2h-2zM672 223h2v2h-2zM672 260h2v2h-2zM672 298h2v2h-2zM672 336h2v2h-2zM672 373h2v2h-2zM672 411h2v2h-2zM672 449h2v2h-2zM672 486h2v2h-2zM672 524h2v2h-2zM672 562h2v2h-2zM672 599h2v2h-2zM672 637h2v2h-2zM672 675h2v2h-2zM672 712h2v2h-2zM672 750h2v2h-2zM672 788h2v2h-2zM708 34h2v2h-2zM708 72h2v2h-2zM708 110h2v2h-2zM708 147h2v2h-2zM708 185h2v2h-2zM708 223h2v2h-2zM708 260h2v2h-2zM708 298h2v2h-2zM708 336h2v2h-2zM708 373h2v2h-2zM708 411h2v2h-2zM708 449h2v2h-2zM708 486h2v2h-2zM708 524h2v2h-2zM708 562h2v2h-2zM708 599h2v2h-2zM708 637h2v2h-2zM708 675h2v2h-2zM708 712h2v2h-2zM708 750h2v2h-2zM708 788h2v2h-2zM744 34h2v2h-2zM744 72h2v2h-2zM744 110h2v2h-2zM744 147h2v2h-2zM744 185h2v2h-2zM744 223h2v2h-2zM744 260h2v2h-2zM744 298h2v2h-2zM744 336h2v2h-2zM744 373h2v2h-2zM744 411h2v2h-2zM744 449h2v2h-2zM744 486h2v2h-2zM744 524h2v2h-2zM744 562h2v2h-2zM744 599h2v2h-2zM744 637h2v2h-2zM744 675h2v2h-2zM744 712h2v2h-2zM744 750h2v2h-2zM744 788h2v2h-2zM781 34h2v2h-2zM781 72h2v2h-2zM781 110h2v2h-2zM781 147h2v2h-2zM781 185h2v2h-2zM781 223h2v2h-2zM781 260h2v2h-2zM781 298h2v2h-2zM781 336h2v2h-2zM781 373h2v2h-2zM781 411h2v2h-2zM781 449h2v2h-2zM781 486h2v2h-2zM781 524h2v2h-2zM781 562h2v2h-2zM781 599h2v2h-2zM781 637h2v2h-2zM781 675h2v2h-2zM781 712h2v2h-2zM781 750h2v2h-2zM781 788h2v2h-2zM817 34h2v2h-2zM817 72h2v2h-2zM817 110h2v2h-2zM817 147h2v2h-2zM817 185h2v2h-2zM817 223h2v2h-2zM817 260h2v2h-2zM817 298h2v2h-2zM817 336h2v2h-2zM817 373h2v2h-2zM817 411h2v2h-2zM817 449h2v2h-2zM817 486h2v2h-2zM817 524h2v2h-2zM817 562h2v2h-2zM817 599h2v2h-2zM817 637h2v2h-2zM817 675h2v2h-2zM817 712h2v2h-2zM817 750h2v2h-2zM817 788h2v2h-2zM853 34h2v2h-2zM853 72h2v2h-2zM853 110h2v2h-2zM853 147h2v2h-2zM853 185h2v2h-2zM853 223h2v2h-2zM853 260h2v2h-2zM853 298h2v2h-2zM853 336h2v2h-2zM853 373h2v2h-2zM853 411h2v2h-2zM853 449h2v2h-2zM853 486h2v2h-2zM853 524h2v2h-2zM853 562h2v2h-2zM853 599h2v2h-2zM853 637h2v2h-2zM853 675h2v2h-2zM853 712h2v2h-2zM853 750h2v2h-2zM853 788h2v2h-2zM889 34h2v2h-2zM889 72h2v2h-2zM889 110h2v2h-2zM889 147h2v2h-2zM889 185h2v2h-2zM889 223h2v2h-2zM889 260h2v2h-2zM889 298h2v2h-2zM889 336h2v2h-2zM889 373h2v2h-2zM889 411h2v2h-2zM889 449h2v2h-2zM889 486h2v2h-2zM889 524h2v2h-2zM889 562h2v2h-2zM889 599h2v2h-2zM889 637h2v2h-2zM889 675h2v2h-2zM889 712h2v2h-2zM889 750h2v2h-2zM889 788h2v2h-2zM926 34h2v2h-2zM926 72h2v2h-2zM926 110h2v2h-2zM926 147h2v2h-2zM926 185h2v2h-2zM926 223h2v2h-2zM926 260h2v2h-2zM926 298h2v2h-2zM926 336h2v2h-2zM926 373h2v2h-2zM926 411h2v2h-2zM926 449h2v2h-2zM926 486h2v2h-2zM926 524h2v2h-2zM926 562h2v2h-2zM926 599h2v2h-2zM926 637h2v2h-2zM926 675h2v2h-2zM926 712h2v2h-2zM926 750h2v2h-2zM926 788h2v2h-2zM962 34h2v2h-2zM962 72h2v2h-2zM962 110h2v2h-2zM962 147h2v2h-2zM962 185h2v2h-2zM962 223h2v2h-2zM962 260h2v2h-2zM962 298h2v2h-2zM962 336h2v2h-2zM962 373h2v2h-2zM962 411h2v2h-2zM962 449h2v2h-2zM962 486h2v2h-2zM962 524h2v2h-2zM962 562h2v2h-2zM962 599h2v2h-2zM962 637h2v2h-2zM962 675h2v2h-2zM962 712h2v2h-2zM962 750h2v2h-2zM962 788h2v2h-2zM998 34h2v2h-2zM998 72h2v2h-2zM998 110h2v2h-2zM998 147h2v2h-2zM998 185h2v2h-2zM998 223h2v2h-2zM998 260h2v2h-2zM998 298h2v2h-2zM998 336h2v2h-2zM998 373h2v2h-2zM998 411h2v2h-2zM998 449h2v2h-2zM998 486h2v2h-2zM998 524h2v2h-2zM998 562h2v2h-2zM998 599h2v2h-2zM998 637h2v2h-2zM998 675h2v2h-2zM998 712h2v2h-2zM998 750h2v2h-2zM998 788h2v2h-2zM1035 34h2v2h-2zM1035 72h2v2h-2zM1035 110h2v2h-2zM1035 147h2v2h-2zM1035 185h2v2h-2zM1035 223h2v2h-2zM1035 260h2v2h-2zM1035 298h2v2h-2zM1035 336h2v2h-2zM1035 373h2v2h-2zM1035 411h2v2h-2zM1035 449h2v2h-2zM1035 486h2v2h-2zM1035 524h2v2h-2zM1035 562h2v2h-2zM1035 599h2v2h-2zM1035 637h2v2h-2zM1035 675h2v2h-2zM1035 712h2v2h-2zM1035 750h2v2h-2zM1035 788h2v2h-2zM1071 34h2v2h-2zM1071 72h2v2h-2zM1071 110h2v2h-2zM1071 147h2v2h-2zM1071 185h2v2h-2zM1071 223h2v2h-2zM1071 260h2v2h-2zM1071 298h2v2h-2zM1071 336h2v2h-2zM1071 373h2v2h-2zM1071 411h2v2h-2zM1071 449h2v2h-2zM1071 486h2v2h-2zM1071 524h2v2h-2zM1071 562h2v2h-2zM1071 599h2v2h-2zM1071 637h2v2h-2zM1071 675h2v2h-2zM1071 712h2v2h-2zM1071 750h2v2h-2zM1071 788h2v2h-2zM1107 34h2v2h-2zM1107 72h2v2h-2zM1107 110h2v2h-2zM1107 147h2v2h-2zM1107 185h2v2h-2zM1107 223h2v2h-2zM1107 260h2v2h-2zM1107 298h2v2h-2zM1107 336h2v2h-2zM1107 373h2v2h-2zM1107 411h2v2h-2zM1107 449h2v2h-2zM1107 486h2v2h-2zM1107 524h2v2h-2zM1107 562h2v2h-2zM1107 599h2v2h-2zM1107 637h2v2h-2zM1107 675h2v2h-2zM1107 712h2v2h-2zM1107 750h2v2h-2zM1107 788h2v2h-2zM1143 34h2v2h-2zM1143 72h2v2h-2zM1143 110h2v2h-2zM1143 147h2v2h-2zM1143 185h2v2h-2zM1143 223h2v2h-2zM1143 260h2v2h-2zM1143 298h2v2h-2zM1143 336h2v2h-2zM1143 373h2v2h-2zM1143 411h2v2h-2zM1143 449h2v2h-2zM1143 486h2v2h-2zM1143 524h2v2h-2zM1143 562h2v2h-2zM1143 599h2v2h-2zM1143 637h2v2h-2zM1143 675h2v2h-2zM1143 712h2v2h-2zM1143 750h2v2h-2zM1143 788h2v2h-2zM1180 34h2v2h-2zM1180 72h2v2h-2zM1180 110h2v2h-2zM1180 147h2v2h-2zM1180 185h2v2h-2zM1180 223h2v2h-2zM1180 260h2v2h-2zM1180 298h2v2h-2zM1180 336h2v2h-2zM1180 373h2v2h-2zM1180 411h2v2h-2zM1180 449h2v2h-2zM1180 486h2v2h-2zM1180 524h2v2h-2zM1180 562h2v2h-2zM1180 599h2v2h-2zM1180 637h2v2h-2zM1180 675h2v2h-2zM1180 712h2v2h-2zM1180 750h2v2h-2zM1180 788h2v2h-2zM1216 34h2v2h-2zM1216 72h2v2h-2zM1216 110h2v2h-2zM1216 147h2v2h-2zM1216 185h2v2h-2zM1216 223h2v2h-2zM1216 260h2v2h-2zM1216 298h2v2h-2zM1216 336h2v2h-2zM1216 373h2v2h-2zM1216 411h2v2h-2zM1216 449h2v2h-2zM1216 486h2v2h-2zM1216 524h2v2h-2zM1216 562h2v2h-2zM1216 599h2v2h-2zM1216 637h2v2h-2zM1216 675h2v2h-2zM1216 712h2v2h-2zM1216 750h2v2h-2zM1216 788h2v2h-2zM1252 34h2v2h-2zM1252 72h2v2h-2zM1252 110h2v2h-2zM1252 147h2v2h-2zM1252 185h2v2h-2zM1252 223h2v2h-2zM1252 260h2v2h-2zM1252 298h2v2h-2zM1252 336h2v2h-2zM1252 373h2v2h-2zM1252 411h2v2h-2zM1252 449h2v2h-2zM1252 486h2v2h-2zM1252 524h2v2h-2zM1252 562h2v2h-2zM1252 599h2v2h-2zM1252 637h2v2h-2zM1252 675h2v2h-2zM1252 712h2v2h-2zM1252 750h2v2h-2zM1252 788h2v2h-2zM1288 34h2v2h-2zM1288 72h2v2h-2zM1288 110h2v2h-2zM1288 147h2v2h-2zM1288 185h2v2h-2zM1288 223h2v2h-2zM1288 260h2v2h-2zM1288 298h2v2h-2zM1288 336h2v2h-2zM1288 373h2v2h-2zM1288 411h2v2h-2zM1288 449h2v2h-2zM1288 486h2v2h-2zM1288 524h2v2h-2zM1288 562h2v2h-2zM1288 599h2v2h-2zM1288 637h2v2h-2zM1288 675h2v2h-2zM1288 712h2v2h-2zM1288 750h2v2h-2zM1288 788h2v2h-2zM1325 34h2v2h-2zM1325 72h2v2h-2zM1325 110h2v2h-2zM1325 147h2v2h-2zM1325 185h2v2h-2zM1325 223h2v2h-2zM1325 260h2v2h-2zM1325 298h2v2h-2zM1325 336h2v2h-2zM1325 373h2v2h-2zM1325 411h2v2h-2zM1325 449h2v2h-2zM1325 486h2v2h-2zM1325 524h2v2h-2zM1325 562h2v2h-2zM1325 599h2v2h-2zM1325 637h2v2h-2zM1325 675h2v2h-2zM1325 712h2v2h-2zM1325 750h2v2h-2zM1325 788h2v2h-2zM1361 34h2v2h-2zM1361 72h2v2h-2zM1361 110h2v2h-2zM1361 147h2v2h-2zM1361 185h2v2h-2zM1361 223h2v2h-2zM1361 260h2v2h-2zM1361 298h2v2h-2zM1361 336h2v2h-2zM1361 373h2v2h-2zM1361 411h2v2h-2zM1361 449h2v2h-2zM1361 486h2v2h-2zM1361 524h2v2h-2zM1361 562h2v2h-2zM1361 599h2v2h-2zM1361 637h2v2h-2zM1361 675h2v2h-2zM1361 712h2v2h-2zM1361 750h2v2h-2zM1361 788h2v2h-2zM1397 34h2v2h-2zM1397 72h2v2h-2zM1397 110h2v2h-2zM1397 147h2v2h-2zM1397 185h2v2h-2zM1397 223h2v2h-2zM1397 260h2v2h-2zM1397 298h2v2h-2zM1397 336h2v2h-2zM1397 373h2v2h-2zM1397 411h2v2h-2zM1397 449h2v2h-2zM1397 486h2v2h-2zM1397 524h2v2h-2zM1397 562h2v2h-2zM1397 599h2v2h-2zM1397 637h2v2h-2zM1397 675h2v2h-2zM1397 712h2v2h-2zM1397 750h2v2h-2zM1397 788h2v2h-2zM1434 34h2v2h-2zM1434 72h2v2h-2zM1434 110h2v2h-2zM1434 147h2v2h-2zM1434 185h2v2h-2zM1434 223h2v2h-2zM1434 260h2v2h-2zM1434 298h2v2h-2zM1434 336h2v2h-2zM1434 373h2v2h-2zM1434 411h2v2h-2zM1434 449h2v2h-2zM1434 486h2v2h-2zM1434 524h2v2h-2zM1434 562h2v2h-2zM1434 599h2v2h-2zM1434 637h2v2h-2zM1434 675h2v2h-2zM1434 712h2v2h-2zM1434 750h2v2h-2zM1434 788h2v2h-2zM1470 34h2v2h-2zM1470 72h2v2h-2zM1470 110h2v2h-2zM1470 147h2v2h-2zM1470 185h2v2h-2zM1470 223h2v2h-2zM1470 260h2v2h-2zM1470 298h2v2h-2zM1470 336h2v2h-2zM1470 373h2v2h-2zM1470 411h2v2h-2zM1470 449h2v2h-2zM1470 486h2v2h-2zM1470 524h2v2h-2zM1470 562h2v2h-2zM1470 599h2v2h-2zM1470 637h2v2h-2zM1470 675h2v2h-2zM1470 712h2v2h-2zM1470 750h2v2h-2zM1470 788h2v2h-2zM1506 34h2v2h-2zM1506 72h2v2h-2zM1506 110h2v2h-2zM1506 147h2v2h-2zM1506 185h2v2h-2zM1506 223h2v2h-2zM1506 260h2v2h-2zM1506 298h2v2h-2zM1506 336h2v2h-2zM1506 373h2v2h-2zM1506 411h2v2h-2zM1506 449h2v2h-2zM1506 486h2v2h-2zM1506 524h2v2h-2zM1506 562h2v2h-2zM1506 599h2v2h-2zM1506 637h2v2h-2zM1506 675h2v2h-2zM1506 712h2v2h-2zM1506 750h2v2h-2zM1506 788h2v2h-2zM1542 34h2v2h-2zM1542 72h2v2h-2zM1542 110h2v2h-2zM1542 147h2v2h-2zM1542 185h2v2h-2zM1542 223h2v2h-2zM1542 260h2v2h-2zM1542 298h2v2h-2zM1542 336h2v2h-2zM1542 373h2v2h-2zM1542 411h2v2h-2zM1542 449h2v2h-2zM1542 486h2v2h-2zM1542 524h2v2h-2zM1542 562h2v2h-2zM1542 599h2v2h-2zM1542 637h2v2h-2zM1542 675h2v2h-2zM1542 712h2v2h-2zM1542 750h2v2h-2zM1542 788h2v2h-2zM1579 34h2v2h-2zM1579 72h2v2h-2zM1579 110h2v2h-2zM1579 147h2v2h-2zM1579 185h2v2h-2zM1579 223h2v2h-2zM1579 260h2v2h-2zM1579 298h2v2h-2zM1579 336h2v2h-2zM1579 373h2v2h-2zM1579 411h2v2h-2zM1579 449h2v2h-2zM1579 486h2v2h-2zM1579 524h2v2h-2zM1579 562h2v2h-2zM1579 599h2v2h-2zM1579 637h2v2h-2zM1579 675h2v2h-2zM1579 712h2v2h-2zM1579 750h2v2h-2zM1579 788h2v2h-2zM1615 34h2v2h-2zM1615 72h2v2h-2zM1615 110h2v2h-2zM1615 147h2v2h-2zM1615 185h2v2h-2zM1615 223h2v2h-2zM1615 260h2v2h-2zM1615 298h2v2h-2zM1615 336h2v2h-2zM1615 373h2v2h-2zM1615 411h2v2h-2zM1615 449h2v2h-2zM1615 486h2v2h-2zM1615 524h2v2h-2zM1615 562h2v2h-2zM1615 599h2v2h-2zM1615 637h2v2h-2zM1615 675h2v2h-2zM1615 712h2v2h-2zM1615 750h2v2h-2zM1615 788h2v2h-2zM1651 34h2v2h-2zM1651 72h2v2h-2zM1651 110h2v2h-2zM1651 147h2v2h-2zM1651 185h2v2h-2zM1651 223h2v2h-2zM1651 260h2v2h-2zM1651 298h2v2h-2zM1651 336h2v2h-2zM1651 373h2v2h-2zM1651 411h2v2h-2zM1651 449h2v2h-2zM1651 486h2v2h-2zM1651 524h2v2h-2zM1651 562h2v2h-2zM1651 599h2v2h-2zM1651 637h2v2h-2zM1651 675h2v2h-2zM1651 712h2v2h-2zM1651 750h2v2h-2zM1651 788h2v2h-2zM1687 34h2v2h-2zM1687 72h2v2h-2zM1687 110h2v2h-2zM1687 147h2v2h-2zM1687 185h2v2h-2zM1687 223h2v2h-2zM1687 260h2v2h-2zM1687 298h2v2h-2zM1687 336h2v2h-2zM1687 373h2v2h-2zM1687 411h2v2h-2zM1687 449h2v2h-2zM1687 486h2v2h-2zM1687 524h2v2h-2zM1687 562h2v2h-2zM1687 599h2v2h-2zM1687 637h2v2h-2zM1687 675h2v2h-2zM1687 712h2v2h-2zM1687 750h2v2h-2zM1687 788h2v2h-2z" fill="#e8e8ff"/>
<path d="M854.5 0V819M0 412.5H1702" stroke="#a8a8ff" stroke-width="1"/>
<g fill="none" stroke="#22f03a" stroke-width="2" shape-rendering="crispEdges"><rect x="310.6" y="35.9" width="1088.1" height="753.2" rx="83.4" ry="86.6"/><ellipse cx="401.3" cy="130.1" rx="36.3" ry="37.7"/><ellipse cx="401.3" cy="695" rx="36.3" ry="37.7"/><ellipse cx="1308.1" cy="130.1" rx="36.3" ry="37.7"/><ellipse cx="1308.1" cy="695" rx="36.3" ry="37.7"/><path d="M523 130.1L1186.4 130.1A36.3 37.7 0 0 1 1221.2 157A90.7 94.1 0 0 0 1282.2 220.3A36.3 37.7 0 0 1 1308.1 256.4L1308.1 568.6A36.3 37.7 0 0 1 1282.2 604.7A90.7 94.1 0 0 0 1221.2 668A36.3 37.7 0 0 1 1186.4 695L523 695A36.3 37.7 0 0 1 488.2 668A90.7 94.1 0 0 0 427.2 604.7A36.3 37.7 0 0 1 401.3 568.6L401.3 256.4A36.3 37.7 0 0 1 427.2 220.3A90.7 94.1 0 0 0 488.2 157A36.3 37.7 0 0 1 523 130.1Z"/></g>
<path d="M1444 768v22M1662 768v22M1444 778.5H1662" stroke="#fff" stroke-width="2.4" fill="none"/>
<text x="1543.5" y="768" fill="#f4f4ff" font-family="Liberation Mono" font-size="12" text-anchor="middle" letter-spacing="0.6">30.00</text>
<g stroke="#d8d8ff" stroke-width="1.2" fill="none"><path d="M302.5 785L306 780.5H314.5L318 785V792L314.5 796.5H306L302.5 792Z"/><path d="M310.5 780v17M302.5 788.5h15.5"/></g>
</svg></div>
<div class="a" style="left:214px;top:1001px;width:1706px;height:54px;background:#f0f0f0"></div>
<div class="a" style="left:215px;top:1004px;width:1703px;height:47px;background:#e8e8e8;border:1px solid #a0a0a0"></div>
<div class="a" style="left:222px;top:1029px;width:13px;height:13px;background:#fff;border:1px solid #333"></div>
<div class="t" style="font-size:11.98px;color:#000;top:1011.86px;left:244.3px;transform:scaleX(0.885);transform-origin:0 0;">Machine Zero X:</div>
<div class="a" style="left:244px;top:1025.5px;width:135px;height:20.0px;background:#e6e6e6;border:1px solid #9a9a9a"></div>
<div class="t" style="font-size:11.98px;color:#000;top:1029.46px;right:1543.5px;transform:scaleX(0.885);transform-origin:100% 0;">-75.0</div>
<div class="a" style="left:394px;top:1029px;width:13px;height:13px;background:#fff;border:1px solid #333"></div>
<div class="t" style="font-size:11.98px;color:#000;top:1011.86px;left:417.2px;transform:scaleX(0.885);transform-origin:0 0;">Machine Zero Y:</div>
<div class="a" style="left:417px;top:1025.5px;width:128px;height:20.0px;background:#e6e6e6;border:1px solid #9a9a9a"></div>
<div class="t" style="font-size:11.98px;color:#000;top:1029.46px;right:1377.5px;transform:scaleX(0.885);transform-origin:100% 0;">-50.0</div>
<div class="t" style="font-size:11.98px;color:#000;top:1011.86px;left:559.2px;transform:scaleX(0.885);transform-origin:0 0;">Machine Zero Z:</div>
<div class="a" style="left:559px;top:1025.5px;width:135px;height:20.0px;background:#e6e6e6;border:1px solid #9a9a9a"></div>
<div class="t" style="font-size:11.98px;color:#000;top:1029.46px;right:1228.5px;transform:scaleX(0.885);transform-origin:100% 0;">0.0</div>
<div class="a" style="left:1635px;top:1029px;width:13px;height:13px;background:#fff;border:1px solid #333"></div>
<div class="t" style="font-size:11.98px;color:#000;top:1030.86px;left:1651.3px;transform:scaleX(0.885);transform-origin:0 0;">Use Y-Axis Substitution</div>
<div class="t" style="font-size:11.98px;color:#a0a0a0;top:1012.16px;left:1775.6px;transform:scaleX(0.885);transform-origin:0 0;">Part Diameter</div>
<div class="a" style="left:1775px;top:1025.5px;width:135px;height:20.0px;background:#e6e6e6;border:1px solid #c8c8c8"></div>
<div class="t" style="font-size:11.98px;color:#8d8d8d;top:1029.46px;right:13.5px;transform:scaleX(0.885);transform-origin:100% 0;">50.0</div>
<div class="a" style="left:0px;top:1055px;width:1920px;height:25px;background:#2b579a"></div>
<div class="t" style="font-size:12.8px;color:#fff;top:1061.96px;left:117px;transform:scaleX(0.9247488209965142);transform-origin:0 0;">Select or indicate next hole&#x27;s center point. Selection is possible from circles and points</div>
<div class="t" style="font-size:12.8px;color:#fff;top:1061.96px;left:1327.4px;transform:scaleX(0.8746355685131195);transform-origin:0 0;">Licensed to DEMO - NOT FOR RESALE - CIMCO A/S</div>
<div class="t" style="font-size:12.8px;color:#fff;top:1061.96px;left:1666.5px;transform:scaleX(0.8543531326281529);transform-origin:0 0;">X: -117.658 Y: 43.722</div>
<div class="t" style="font-size:12.8px;color:#fff;top:1061.96px;left:1820.5px;transform:scaleX(0.88);transform-origin:0 0;">INS</div>
<div class="t" style="font-size:12.8px;color:#fff;top:1061.96px;left:1848px;transform:scaleX(0.8625954198473282);transform-origin:0 0;">2:18:49 PM</div>

<div class="a" style="left:639px;top:254px;width:643px;height:571px;background:#f0f0f0;border:1px solid #2b50b4;box-shadow:0 2px 12px 2px rgba(0,0,50,0.38)"></div>
<div class="a" style="left:640px;top:255px;width:641px;height:569px;border-right:1px solid #d8faff;border-bottom:1px solid #d8faff"></div>
<div class="a" style="left:640px;top:255px;width:640px;height:26px;background:#fff"></div>
<div class="t" style="font-size:12px;color:#000;top:262.14px;left:643.5px;">Drilling Parameters</div>
<svg class="a" style="left:1258px;top:260px" width="16" height="16"><path d="M3 3l10 10M13 3L3 13" stroke="#111" stroke-width="1.2"/></svg>
<div class="a" style="left:648px;top:296px;width:623px;height:35px;border:1px solid #dcdcdc"></div>
<div class="a" style="left:654px;top:293px;width:62px;height:6px;background:#f0f0f0"></div>
<div class="t" style="font-size:11.98px;color:#000;top:291.16px;left:657px;transform:scaleX(0.885);transform-origin:0 0;">Output Type</div>
<div class="a" style="left:654.7px;top:305.7px;width:13.0px;height:13.0px;border-radius:50%;border:1px solid #333;background:#fff"></div>
<div class="a" style="left:657.7px;top:308.7px;width:7.0px;height:7.0px;border-radius:50%;background:#333"></div>
<div class="t" style="font-size:11.98px;color:#000;top:306.66px;left:671.5px;transform:scaleX(0.885);transform-origin:0 0;">Canned</div>
<div class="a" style="left:962.5px;top:305.7px;width:13.0px;height:13.0px;border-radius:50%;border:1px solid #333;background:#fff"></div>
<div class="t" style="font-size:11.98px;color:#000;top:306.66px;left:979.4px;transform:scaleX(0.885);transform-origin:0 0;">Longhand</div>
<div class="a" style="left:648px;top:347px;width:623px;height:44px;border:1px solid #dcdcdc"></div>
<div class="a" style="left:654px;top:344px;width:62px;height:6px;background:#f0f0f0"></div>
<div class="t" style="font-size:11.98px;color:#000;top:342.16px;left:657px;transform:scaleX(0.885);transform-origin:0 0;">Drilling Type</div>
<div class="a" style="left:655px;top:357px;width:608px;height:22px;background:#e5e5e5;border:1px solid #adadad"></div>
<div class="t" style="font-size:11.98px;color:#000;top:362.66px;left:659.3px;transform:scaleX(0.885);transform-origin:0 0;">Standard Peck Drilling G83</div>
<svg class="a" style="left:1248px;top:364px" width="12" height="8"><path d="M1 1.5l5 4.5 5-4.5" fill="none" stroke="#555" stroke-width="1.2"/></svg>
<div class="a" style="left:648px;top:406px;width:405px;height:119px;border:1px solid #dcdcdc"></div>
<div class="a" style="left:654px;top:403px;width:37px;height:6px;background:#f0f0f0"></div>
<div class="t" style="font-size:11.98px;color:#000;top:401.16px;left:657px;transform:scaleX(0.885);transform-origin:0 0;">Depths</div>
<div class="t" style="font-size:11.98px;color:#000;top:418.16px;left:655.4px;transform:scaleX(0.885);transform-origin:0 0;">Retract Plane:</div>
<div class="a" style="left:655px;top:433px;width:180px;height:21px;background:#fff;border:1px solid #7a7a7a"></div>
<div class="t" style="font-size:11.98px;color:#000;top:437.96px;right:1088px;transform:scaleX(0.885);transform-origin:100% 0;">10</div>
<div class="t" style="font-size:11.98px;color:#000;top:418.16px;left:865.4px;transform:scaleX(0.885);transform-origin:0 0;">Reference Plane:</div>
<div class="a" style="left:865px;top:433px;width:180px;height:21px;background:#fff;border:1px solid #7a7a7a"></div>
<div class="t" style="font-size:11.98px;color:#000;top:437.96px;right:878px;transform:scaleX(0.885);transform-origin:100% 0;">0.0</div>
<div class="t" style="font-size:11.98px;color:#000;top:460.16px;left:655.4px;transform:scaleX(0.885);transform-origin:0 0;">Safe Distance:</div>
<div class="t" style="font-size:11.98px;color:#000;top:460.16px;left:865.4px;transform:scaleX(0.885);transform-origin:0 0;">Depth:</div>
<div class="a" style="left:654.7px;top:476.8px;width:13.0px;height:13.0px;border-radius:50%;border:1px solid #333;background:#fff"></div>
<div class="a" style="left:657.7px;top:479.8px;width:7.0px;height:7.0px;border-radius:50%;background:#333"></div>
<div class="t" style="font-size:11.98px;color:#000;top:477.66px;left:671.4px;transform:scaleX(0.885);transform-origin:0 0;">Incremental</div>
<div class="a" style="left:744.5px;top:476.8px;width:13.0px;height:13.0px;border-radius:50%;border:1px solid #333;background:#fff"></div>
<div class="t" style="font-size:11.98px;color:#000;top:477.66px;left:760.9px;transform:scaleX(0.885);transform-origin:0 0;">Absolute</div>
<div class="a" style="left:864.5px;top:476.8px;width:13.0px;height:13.0px;border-radius:50%;border:1px solid #333;background:#fff"></div>
<div class="a" style="left:867.5px;top:479.8px;width:7.0px;height:7.0px;border-radius:50%;background:#1a5fb4"></div>
<div class="t" style="font-size:11.98px;color:#000;top:477.66px;left:881px;transform:scaleX(0.885);transform-origin:0 0;">Incremental</div>
<div class="a" style="left:954.5px;top:476.8px;width:13.0px;height:13.0px;border-radius:50%;border:1px solid #333;background:#fff"></div>
<div class="t" style="font-size:11.98px;color:#000;top:477.66px;left:970.8px;transform:scaleX(0.885);transform-origin:0 0;">Absolute</div>
<div class="a" style="left:655px;top:492px;width:180px;height:21px;background:#fff;border:1px solid #3a7fd0"></div>
<div class="t" style="font-size:11.98px;color:#000;top:496.96px;right:1088px;transform:scaleX(0.885);transform-origin:100% 0;">2</div>
<div class="a" style="left:865px;top:492px;width:180px;height:21px;background:#fff;border:1px solid #333"></div>
<div class="t" style="font-size:11.98px;color:#000;top:496.96px;right:878px;transform:scaleX(0.885);transform-origin:100% 0;">-5.0</div>
<div class="a" style="left:1068px;top:406px;width:203px;height:238px;border:1px solid #dcdcdc"></div>
<div class="a" style="left:1074px;top:403px;width:52px;height:6px;background:#f0f0f0"></div>
<div class="t" style="font-size:11.98px;color:#000;top:401.16px;left:1077px;transform:scaleX(0.885);transform-origin:0 0;">Threading</div>
<div class="a" style="left:648px;top:541px;width:405px;height:60px;border:1px solid #dcdcdc"></div>
<div class="a" style="left:654px;top:538px;width:50px;height:6px;background:#f0f0f0"></div>
<div class="t" style="font-size:11.98px;color:#000;top:536.16px;left:657px;transform:scaleX(0.885);transform-origin:0 0;">Feedrates</div>
<div class="a" style="left:654.5px;top:548.8px;width:13.0px;height:13.0px;border-radius:50%;border:1px solid #333;background:#fff"></div>
<div class="a" style="left:657.5px;top:551.8px;width:7.0px;height:7.0px;border-radius:50%;background:#333"></div>
<div class="t" style="font-size:11.98px;color:#000;top:549.66px;left:671.5px;transform:scaleX(0.885);transform-origin:0 0;">Use Plunging</div>
<div class="a" style="left:864.5px;top:548.8px;width:13.0px;height:13.0px;border-radius:50%;border:1px solid #bcbcbc;background:#f0f0f0"></div>
<div class="a" style="left:867.5px;top:551.8px;width:7.0px;height:7.0px;border-radius:50%;background:#c4c4c4"></div>
<div class="t" style="font-size:11.98px;color:#8d8d8d;top:549.66px;left:881px;transform:scaleX(0.885);transform-origin:0 0;">Use Retract</div>
<div class="a" style="left:655px;top:568px;width:180px;height:21px;background:#fff;border:1px solid #7a7a7a"></div>
<div class="t" style="font-size:11.98px;color:#000;top:572.96px;right:1088px;transform:scaleX(0.885);transform-origin:100% 0;">200.0</div>
<div class="a" style="left:865px;top:568px;width:180px;height:21px;background:#f0f0f0;border:1px solid #cfcfcf"></div>
<div class="t" style="font-size:11.98px;color:#8d8d8d;top:572.96px;right:878px;transform:scaleX(0.885);transform-origin:100% 0;">500.0</div>
<div class="a" style="left:648px;top:617px;width:405px;height:143px;border:1px solid #dcdcdc"></div>
<div class="t" style="font-size:11.98px;color:#000;top:628.16px;left:657.3px;transform:scaleX(0.885);transform-origin:0 0;">First Depth:</div>
<div class="a" style="left:657px;top:644px;width:180px;height:21px;background:#fff;border:1px solid #333"></div>
<div class="t" style="font-size:11.98px;color:#000;top:648.96px;right:1086px;transform:scaleX(0.885);transform-origin:100% 0;">1.0</div>
<div class="t" style="font-size:11.98px;color:#8d8d8d;top:628.16px;left:865.4px;transform:scaleX(0.885);transform-origin:0 0;">Pecking Retract:</div>
<div class="a" style="left:865px;top:644px;width:180px;height:21px;background:#f0f0f0;border:1px solid #cfcfcf"></div>
<div class="t" style="font-size:11.98px;color:#8d8d8d;top:648.96px;right:878px;transform:scaleX(0.885);transform-origin:100% 0;">3.0</div>
<div class="t" style="font-size:11.98px;color:#8d8d8d;top:670.56px;left:655.3px;transform:scaleX(0.885);transform-origin:0 0;">Degression Type</div>
<div class="a" style="left:655px;top:689px;width:180px;height:21px;background:#cccccc;border:1px solid #c4c4c4"></div>
<div class="t" style="font-size:11.98px;color:#8d8d8d;top:693.36px;left:658.5px;transform:scaleX(0.885);transform-origin:0 0;">Value</div>
<svg class="a" style="left:820px;top:695px" width="12" height="8"><path d="M1 1.5l5 4.5 5-4.5" fill="none" stroke="#999" stroke-width="1.1"/></svg>
<div class="t" style="font-size:11.98px;color:#8d8d8d;top:670.56px;left:865.4px;transform:scaleX(0.885);transform-origin:0 0;">Minimum Depth:</div>
<div class="a" style="left:865px;top:686px;width:180px;height:21px;background:#f0f0f0;border:1px solid #cfcfcf"></div>
<div class="t" style="font-size:11.98px;color:#8d8d8d;top:690.96px;right:878px;transform:scaleX(0.885);transform-origin:100% 0;">2.5</div>
<div class="t" style="font-size:11.98px;color:#8d8d8d;top:712.26px;left:655.3px;transform:scaleX(0.885);transform-origin:0 0;">Degression:</div>
<div class="a" style="left:655px;top:729px;width:180px;height:21px;background:#f0f0f0;border:1px solid #cfcfcf"></div>
<div class="t" style="font-size:11.98px;color:#8d8d8d;top:733.96px;right:1088px;transform:scaleX(0.885);transform-origin:100% 0;">1.0</div>
<div class="t" style="font-size:11.98px;color:#8d8d8d;top:712.26px;left:865.4px;transform:scaleX(0.885);transform-origin:0 0;">First Feedrate Factor:</div>
<div class="a" style="left:865px;top:730px;width:180px;height:21px;background:#f0f0f0;border:1px solid #cfcfcf"></div>
<div class="t" style="font-size:11.98px;color:#8d8d8d;top:734.96px;right:878px;transform:scaleX(0.885);transform-origin:100% 0;">0.75</div>
<div class="a" style="left:1068px;top:660px;width:203px;height:102px;border:1px solid #dcdcdc"></div>
<div class="a" style="left:1074px;top:657px;width:48px;height:6px;background:#f0f0f0"></div>
<div class="t" style="font-size:11.98px;color:#000;top:655.16px;left:1077px;transform:scaleX(0.885);transform-origin:0 0;">Dwelling</div>
<div class="a" style="left:1074.7px;top:670.5px;width:13.0px;height:13.0px;border-radius:50%;border:1px solid #bcbcbc;background:#f0f0f0"></div>
<div class="a" style="left:1077.7px;top:673.5px;width:7.0px;height:7.0px;border-radius:50%;background:#c4c4c4"></div>
<div class="t" style="font-size:11.98px;color:#8d8d8d;top:671.36px;left:1091.5px;transform:scaleX(0.885);transform-origin:0 0;">Use Upper Dwelling</div>
<div class="a" style="left:1075px;top:688px;width:180px;height:21px;background:#f0f0f0;border:1px solid #cfcfcf"></div>
<div class="t" style="font-size:11.98px;color:#8d8d8d;top:692.96px;right:668px;transform:scaleX(0.885);transform-origin:100% 0;">1.0</div>
<div class="a" style="left:1074.7px;top:711.7px;width:13.0px;height:13.0px;border-radius:50%;border:1px solid #bcbcbc;background:#f0f0f0"></div>
<div class="a" style="left:1077.7px;top:714.7px;width:7.0px;height:7.0px;border-radius:50%;background:#c4c4c4"></div>
<div class="t" style="font-size:11.98px;color:#8d8d8d;top:712.56px;left:1091.5px;transform:scaleX(0.885);transform-origin:0 0;">Use Lower Dwelling</div>
<div class="a" style="left:1075px;top:729px;width:180px;height:21px;background:#f0f0f0;border:1px solid #cfcfcf"></div>
<div class="t" style="font-size:11.98px;color:#8d8d8d;top:733.96px;right:668px;transform:scaleX(0.885);transform-origin:100% 0;">2.0</div>
<div class="a" style="left:649px;top:789px;width:139px;height:22px;background:#e1e1e1;border:1px solid #adadad"></div>
<div class="t" style="font-size:11.98px;color:#000;top:794.46px;left:518.5px;width:400px;text-align:center;transform:scaleX(0.885);transform-origin:50% 0;">Load Parameters</div>
<div class="a" style="left:808px;top:789px;width:139px;height:22px;background:#e1e1e1;border:2px solid #1a72c8;border-right-color:#20609e;border-bottom-color:#20609e"></div>
<div class="t" style="font-size:11.98px;color:#000;top:794.46px;left:677.5px;width:400px;text-align:center;transform:scaleX(0.885);transform-origin:50% 0;">Save Parameters</div>
<div class="a" style="left:1106px;top:789px;width:73px;height:22px;background:#e1e1e1;border:1px solid #adadad"></div>
<div class="t" style="font-size:11.98px;color:#000;top:794.46px;left:942.5px;width:400px;text-align:center;transform:scaleX(0.885);transform-origin:50% 0;">Cancel</div>
<div class="a" style="left:1196px;top:789px;width:73px;height:22px;background:#e1e1e1;border:2px solid #1a72c8;border-right-color:#20609e;border-bottom-color:#20609e"></div>
<div class="t" style="font-size:11.98px;color:#000;top:794.46px;left:1032.5px;width:400px;text-align:center;transform:scaleX(0.885);transform-origin:50% 0;">OK</div>
<svg class="a" style="left:905px;top:463px" width="14" height="22"><path d="M1.5 1.5v15l3.8-3.6 2.6 6 2.2-1-2.6-5.8h5.2z" fill="#fff" stroke="#111" stroke-width="1"/></svg>
</body></html>
